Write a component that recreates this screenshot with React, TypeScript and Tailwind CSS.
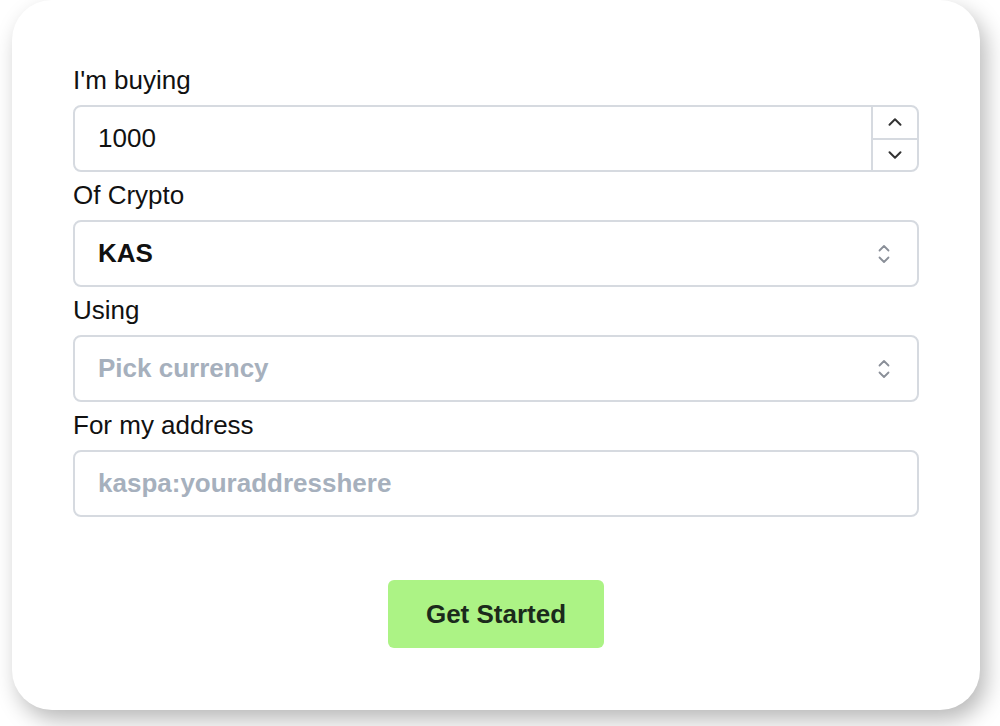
import { ChevronUp, ChevronDown } from 'lucide-react';

function SelectArrows() {
  return (
    <svg width="14" height="22" viewBox="0 0 14 22" fill="none" stroke="#8a8f98" strokeWidth="1.8" strokeLinecap="round" strokeLinejoin="round">
      <path d="M2.5 7.5 7 3l4.5 4.5" />
      <path d="M2.5 14.5 7 19l4.5-4.5" />
    </svg>
  );
}

function Label({ children }: { children: React.ReactNode }) {
  return <label className="block h-[30px] leading-[30px] mb-[10px] text-[26px] text-[#111]">{children}</label>;
}

export default function App() {
  return (
    <div className="min-h-screen bg-white pl-[12px] font-['Liberation_Sans',Arial,sans-serif]">
      <div className="w-[968px] h-[710px] rounded-[40px] bg-white shadow-[6px_10px_22px_rgba(0,0,0,0.28)] px-[61px] pt-[65px] flex flex-col">
        {/* amount */}
        <div>
          <Label>I'm buying</Label>
          <div className="flex h-[67px] border-2 border-[#d6dae0] rounded-lg overflow-hidden">
            <div className="flex-1 flex items-center pl-[23px] text-[26px] text-[#111]">1000</div>
            <div className="w-[46px] flex flex-col border-l-2 border-[#d6dae0]">
              <div className="flex-1 flex items-center justify-center border-b-2 border-[#d6dae0]">
                <ChevronUp size={22} strokeWidth={2.2} color="#333" />
              </div>
              <div className="flex-1 flex items-center justify-center">
                <ChevronDown size={22} strokeWidth={2.2} color="#333" />
              </div>
            </div>
          </div>
        </div>

        <div className="mt-[8px]">
          <Label>Of Crypto</Label>
          <div className="flex items-center justify-between h-[67px] border-2 border-[#d6dae0] rounded-lg pl-[23px] pr-[26px]">
            <span className="text-[26px] font-bold text-[#111]">KAS</span>
            <SelectArrows />
          </div>
        </div>

        <div className="mt-[8px]">
          <Label>Using</Label>
          <div className="flex items-center justify-between h-[67px] border-2 border-[#d6dae0] rounded-lg pl-[23px] pr-[26px]">
            <span className="text-[26px] font-bold text-[#a6b0bd]">Pick currency</span>
            <SelectArrows />
          </div>
        </div>

        <div className="mt-[8px]">
          <Label>For my address</Label>
          <input
            type="text"
            placeholder="kaspa:youraddresshere"
            className="block w-full h-[67px] border-2 border-[#d6dae0] rounded-lg pl-[23px] text-[26px] font-bold text-[#111] placeholder:text-[#a6b0bd] outline-none"
          />
        </div>

        <div className="mt-[63px] flex justify-center">
          <button className="w-[216px] h-[68px] rounded-md bg-[#acf385] text-[26px] font-bold text-[#1b2a1b]">
            Get Started
          </button>
        </div>
      </div>
    </div>
  );
}
